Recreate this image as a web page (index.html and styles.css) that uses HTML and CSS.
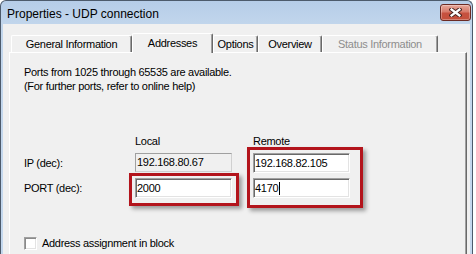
FILE: index.html
```html
<!DOCTYPE html>
<html>
<head>
<meta charset="utf-8">
<title>Properties - UDP connection</title>
<link rel="stylesheet" href="styles.css">
</head>
<body>
<div class="window">
  <div class="titlebar">
    <span class="title">Properties - UDP connection</span>
    <button class="close" aria-label="Close">
      <svg width="13" height="9" viewBox="0 0 13 9">
        <path d="M2.5 1.5 L10.5 7.5 M10.5 1.5 L2.5 7.5" stroke="#4a2420" stroke-width="4.2" stroke-linecap="square" fill="none"/>
        <path d="M2.5 1.5 L10.5 7.5 M10.5 1.5 L2.5 7.5" stroke="#ffffff" stroke-width="2.2" stroke-linecap="square" fill="none"/>
      </svg>
    </button>
  </div>
  <div class="client">
    <div class="tabs">
      <div class="tab t-general">General Information</div>
      <div class="tab t-addr active">Addresses</div>
      <div class="tab t-opt">Options</div>
      <div class="tab t-over">Overview</div>
      <div class="tab t-status disabled">Status Information</div>
    </div>
    <div class="panel">
      <p class="note">Ports from 1025 through 65535 are available.<br>(For further ports, refer to online help)</p>
      <div class="fields">
        <span class="colhead c-local">Local</span>
        <span class="colhead c-remote">Remote</span>
        <span class="label">IP (dec):</span>
        <div class="box ro c-local">192.168.80.67</div>
        <div class="box c-remote">192.168.82.105</div>
        <span class="label">PORT (dec):</span>
        <div class="box c-local">2000</div>
        <div class="box c-remote">4170<span class="caret"></span></div>
      </div>
      <label class="check"><span class="cb"></span>Address assignment in block</label>
      <div class="mark mark-local"></div>
      <div class="mark mark-remote"></div>
    </div>
  </div>
</div>
</body>
</html>
```
FILE: styles.css
```css
html, body {
  margin: 0;
  height: 254px;
  overflow: hidden;
  background: #ffffff;
}
body {
  font-family: "Liberation Sans", Arial, sans-serif;
  font-size: 11px;
  letter-spacing: -0.3px;
  color: #000;
}
.window {
  width: 473px;
  height: 254px;
  box-sizing: border-box;
  border: 1px solid #4d5b6c;
  border-bottom: none;
  border-radius: 6px 6px 0 0;
  background: linear-gradient(#b6cde8, #c2d6ec 24px, #c4d8ee);
  padding: 0 2px;
  display: flex;
  flex-direction: column;
  overflow: hidden;
}
.titlebar {
  height: 23px;
  margin: 0 -2px;
  padding-left: 6px;
  display: flex;
  justify-content: space-between;
  align-items: flex-start;
}
.title {
  font-size: 12px;
  letter-spacing: 0;
  line-height: 15px;
  margin-top: 6px;
}
.close {
  margin-top: 3px;
  margin-right: 1px;
  width: 31px;
  height: 17px;
  padding: 0;
  box-sizing: border-box;
  border: 1px solid #6b2b24;
  border-radius: 3px;
  background: linear-gradient(#e7a79a, #d77b6b 45%, #c6513f 55%, #c4503c);
  box-shadow: inset 0 0 0 1px rgba(255, 255, 255, 0.3);
  display: flex;
  align-items: center;
  justify-content: center;
}
.client {
  flex: 1;
  min-height: 0;
  background: #f0f0f0;
  padding-top: 9px;
  display: flex;
  flex-direction: column;
}
.tabs {
  display: flex;
  align-items: flex-end;
  height: 20px;
  flex-shrink: 0;
  margin-left: 8px;
  margin-bottom: -1px;
  position: relative;
  z-index: 1;
}
.tab {
  box-sizing: border-box;
  height: 17px;
  margin-bottom: 1px;
  border: 1px solid;
  border-color: #ffffff #696969 transparent #ffffff;
  border-bottom: none;
  border-radius: 2px 2px 0 0;
  box-shadow: inset -1px 0 #a0a0a0;
  background: #f0f0f0;
  display: flex;
  align-items: center;
  justify-content: center;
  white-space: nowrap;
}
.tab.active {
  height: 20px;
  margin-bottom: 0;
  padding-bottom: 2px;
}
.tab.disabled { color: #8d8d8d; }
.t-general { width: 121px; }
.t-addr { width: 81px; }
.t-opt { width: 45px; }
.t-over { width: 64px; }
.t-status { width: 116px; }
.panel {
  position: relative;
  flex: 1;
  min-height: 0;
  margin-left: 6px;
  width: 458px;
  box-sizing: border-box;
  border: 1px solid;
  border-color: #ffffff #696969 #696969 #ffffff;
  border-bottom: none;
  box-shadow: inset -1px 0 #a0a0a0;
  padding: 12px 14px 0;
}
.note {
  margin: 0;
  line-height: 14px;
}
.fields {
  display: grid;
  grid-template-columns: 111px 97px 21px 97px;
  grid-template-rows: 14px 20px 20px;
  row-gap: 5px;
  margin-top: 41px;
}
.colhead { line-height: 14px; }
.c-local { grid-column: 2; }
.c-remote { grid-column: 4; }
.label {
  grid-column: 1;
  align-self: center;
  line-height: 14px;
}
.box {
  box-sizing: border-box;
  height: 20px;
  background: #fff;
  border: 1px solid;
  border-color: #a0a0a0 #ffffff #ffffff #a0a0a0;
  box-shadow: inset 1px 1px #696969, inset -1px -1px #e3e3e3;
  padding-left: 1px;
  display: flex;
  align-items: center;
  line-height: 14px;
}
.box.ro {
  height: 19px;
  background: #f0f0f0;
  border-color: #a0a0a0 #d0d0d0 #d0d0d0 #a0a0a0;
  box-shadow: none;
  align-items: flex-start;
  padding-top: 1px;
}
.caret {
  display: inline-block;
  width: 1px;
  height: 13px;
  background: #000;
  margin-left: 1px;
}
.check {
  display: flex;
  align-items: center;
  gap: 5px;
  margin-top: 38px;
  line-height: 14px;
}
.cb {
  width: 13px;
  height: 13px;
  box-sizing: border-box;
  background: #fff;
  border: 1px solid;
  border-color: #a0a0a0 #ffffff #ffffff #a0a0a0;
  box-shadow: inset 1px 1px #8a8a8a, inset -1px -1px #e3e3e3;
}
.mark {
  position: absolute;
  box-sizing: border-box;
  border: 3px solid #b3141c;
  box-shadow: 3px 3px 4px rgba(0, 0, 0, 0.35);
}
.mark-local {
  left: 119px;
  top: 120px;
  width: 110px;
  height: 33px;
}
.mark-remote {
  left: 237px;
  top: 94px;
  width: 116px;
  height: 61px;
}
```
